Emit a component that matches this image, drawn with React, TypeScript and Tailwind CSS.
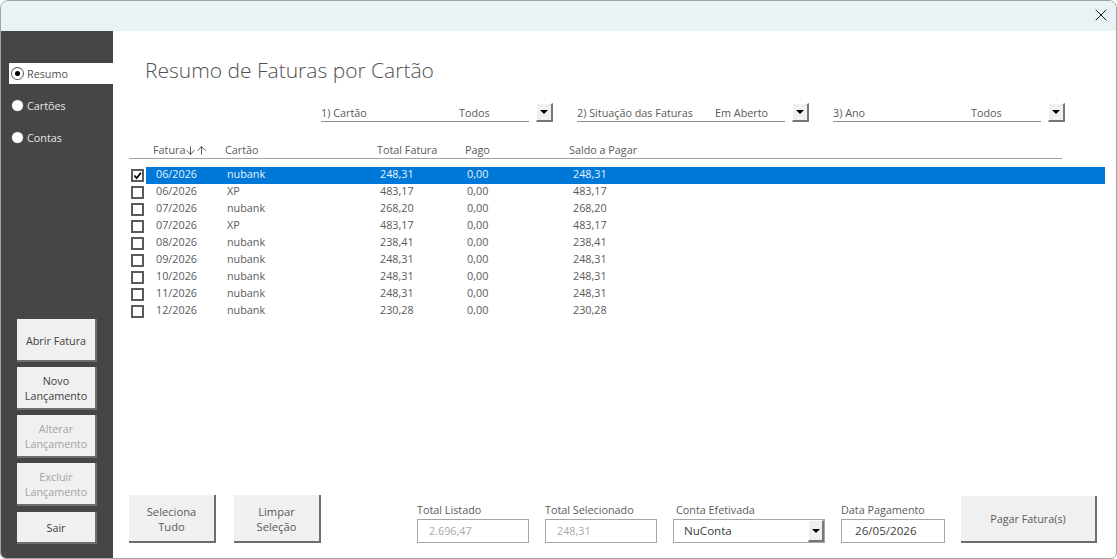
import { ArrowDown, ArrowUp, X } from "lucide-react";

const ROWS = [
  ["06/2026", "nubank", "248,31", "0,00", "248,31"],
  ["06/2026", "XP", "483,17", "0,00", "483,17"],
  ["07/2026", "nubank", "268,20", "0,00", "268,20"],
  ["07/2026", "XP", "483,17", "0,00", "483,17"],
  ["08/2026", "nubank", "238,41", "0,00", "238,41"],
  ["09/2026", "nubank", "248,31", "0,00", "248,31"],
  ["10/2026", "nubank", "248,31", "0,00", "248,31"],
  ["11/2026", "nubank", "248,31", "0,00", "248,31"],
  ["12/2026", "nubank", "230,28", "0,00", "230,28"],
];

const btn =
  "flex items-center justify-center text-center bg-[#f0f0f0] border-r-2 border-b-2 border-[#6e6e6e] leading-[15px]";

function DropButton({ className = "h-[19px] w-[17px]" }: { className?: string }) {
  return (
    <div className={"flex items-center justify-center bg-[#f0f0f0] border-t border-l border-white border-r-2 border-b-2 border-r-[#777] border-b-[#777] " + className}>
      <div className="h-0 w-0 border-x-[4px] border-t-[4px] border-x-transparent border-t-black" />
    </div>
  );
}

function Filter({ label, value }: { label: string; value: string }) {
  return (
    <div className="flex w-[232px] items-start gap-[7px]">
      <div className="flex h-[19px] flex-1 border-b border-[#8f8f8f] leading-[20px]">
        <span className="w-[138px]">{label}</span>
        <span>{value}</span>
      </div>
      <DropButton />
    </div>
  );
}

function Side({ label, active }: { label: string; active?: boolean }) {
  return (
    <div className={"flex h-[21px] items-center pl-[3px] " + (active ? "bg-white text-[#505050]" : "text-[#e6e6e6]")}>
      <div className="flex h-[11px] w-[11px] items-center justify-center rounded-full bg-white ring-1 ring-[#555]">
        {active && <div className="h-[5px] w-[5px] rounded-full bg-black" />}
      </div>
      <span className="ml-[4px] pt-[2px]">{label}</span>
    </div>
  );
}

function Field({ label, value, w, ml, muted, pad = "pl-[11px]" }: { label: string; value: string; w: string; ml: string; muted?: boolean; pad?: string }) {
  return (
    <div className={"flex flex-col " + w + " " + ml}>
      <span className="h-[17px] leading-[15px]">{label}</span>
      <div className={"flex h-[24px] items-center border border-[#a6a6a6] " + pad + " " + (muted ? "text-[#a8a8a8]" : "text-[11.6px] text-[#404040]")}>
        {value}
      </div>
    </div>
  );
}

export default function App() {
  return (
    <div className="h-[559px] w-[1117px] overflow-hidden rounded-t-lg rounded-b-md border border-[#a3a3a3] bg-white font-['Open_Sans',sans-serif] text-[10.8px] text-[#5a5a5a]">
      {/* Title bar */}
      <div className="flex h-[30px] items-start justify-end bg-[#e9f3f6] pr-[5px] pt-[4px]">
        <X size={20} strokeWidth={1.1} className="text-black" />
      </div>

      <div className="flex h-[527px]">
        {/* Sidebar */}
        <div className="flex w-[112px] flex-col bg-[#464646] pl-[8px]">
          <div className="mt-[32px] flex flex-col gap-[11px]">
            <Side label="Resumo" active />
            <Side label="Cartões" />
            <Side label="Contas" />
          </div>
          <div className="ml-[8px] mt-[171px] flex w-[80px] flex-col gap-[5px] text-[#404040]">
            <div className={btn + " h-[43px] pt-[1px]"}>Abrir Fatura</div>
            <div className={btn + " h-[43px]"}>Novo<br />Lançamento</div>
            <div className={btn + " h-[43px] text-[#a3a3a3]"}>Alterar<br />Lançamento</div>
            <div className={btn + " h-[43px] text-[#a3a3a3]"}>Excluir<br />Lançamento</div>
            <div className={btn + " mt-[1px] h-[32px]"}>Sair</div>
          </div>
        </div>

        {/* Main */}
        <div className="flex min-w-0 flex-1 flex-col pl-[16px]">
          <h1 className="ml-[16px] mt-[23px] h-[32px] text-[21px] font-light leading-[32px] text-[#505050]">
            Resumo de Faturas por Cartão
          </h1>

          <div className="ml-[192px] mt-[17px] flex gap-[24px]">
            <Filter label="1) Cartão" value="Todos" />
            <Filter label="2) Situação das Faturas" value="Em Aberto" />
            <Filter label="3) Ano" value="Todos" />
          </div>

          {/* Table header */}
          <div className="mt-[20px] flex h-[17px] w-[933px] items-center border-b border-[#a3a3a3]">
            <span className="ml-[24px] flex w-[72px] items-center">
              Fatura
              <ArrowDown size={13} strokeWidth={1.5} className="-ml-[1px] text-[#333]" />
              <ArrowUp size={13} strokeWidth={1.5} className="-ml-[2px] text-[#333]" />
            </span>
            <span className="w-[152px]">Cartão</span>
            <span className="w-[88px]">Total Fatura</span>
            <span className="w-[104px]">Pago</span>
            <span>Saldo a Pagar</span>
          </div>

          {/* Rows */}
          <div className="mt-[8px] flex flex-col">
            {ROWS.map((r, i) => (
              <div key={i} className="flex h-[17px] items-center">
                <div className="ml-[2px] flex h-[13px] w-[13px] items-center justify-center border-2 border-[#5a5a5a] bg-white">
                  {i === 0 && (
                    <svg viewBox="0 0 10 10" className="h-[9px] w-[9px]">
                      <path d="M1.5 5 L4 7.8 L8.8 2" fill="none" stroke="#000" strokeWidth="2" />
                    </svg>
                  )}
                </div>
                <div className={"ml-[2px] flex h-[17px] w-[959px] items-center pb-[2px] pl-[10px] " + (i === 0 ? "bg-[#0078d7] text-[#e8f2fb]" : "")}>
                  <span className="w-[71px]">{r[0]}</span>
                  <span className="w-[153px]">{r[1]}</span>
                  <span className="w-[87px]">{r[2]}</span>
                  <span className="w-[106px]">{r[3]}</span>
                  <span>{r[4]}</span>
                </div>
              </div>
            ))}
          </div>

          {/* Footer */}
          <div className="mt-auto mb-[15px] flex items-end">
            <div className={btn + " h-[48px] w-[87px] pt-[2px] text-[11.2px]"}>Seleciona<br />Tudo</div>
            <div className={btn + " ml-[18px] h-[48px] w-[87px] pt-[2px] text-[11.2px]"}>Limpar<br />Seleção</div>
            <Field label="Total Listado" value="2.696,47" w="w-[112px]" ml="ml-[96px]" muted />
            <Field label="Total Selecionado" value="248,31" w="w-[112px]" ml="ml-[16px]" muted />
            <div className="ml-[16px] flex w-[152px] flex-col">
              <span className="ml-[3px] h-[17px] leading-[15px]">Conta Efetivada</span>
              <div className="flex h-[24px] items-center border border-[#a6a6a6] pl-[10px] text-[11.6px] text-[#404040]">
                <span className="flex-1">NuConta</span>
                <DropButton className="h-[22px] w-[16px]" />
              </div>
            </div>
            <Field label="Data Pagamento" value="26/05/2026" w="w-[104px]" ml="ml-[16px]" pad="pl-[13px]" />
            <div className={btn + " ml-[16px] h-[47px] w-[136px]"}>Pagar Fatura(s)</div>
          </div>
        </div>
      </div>
    </div>
  );
}
